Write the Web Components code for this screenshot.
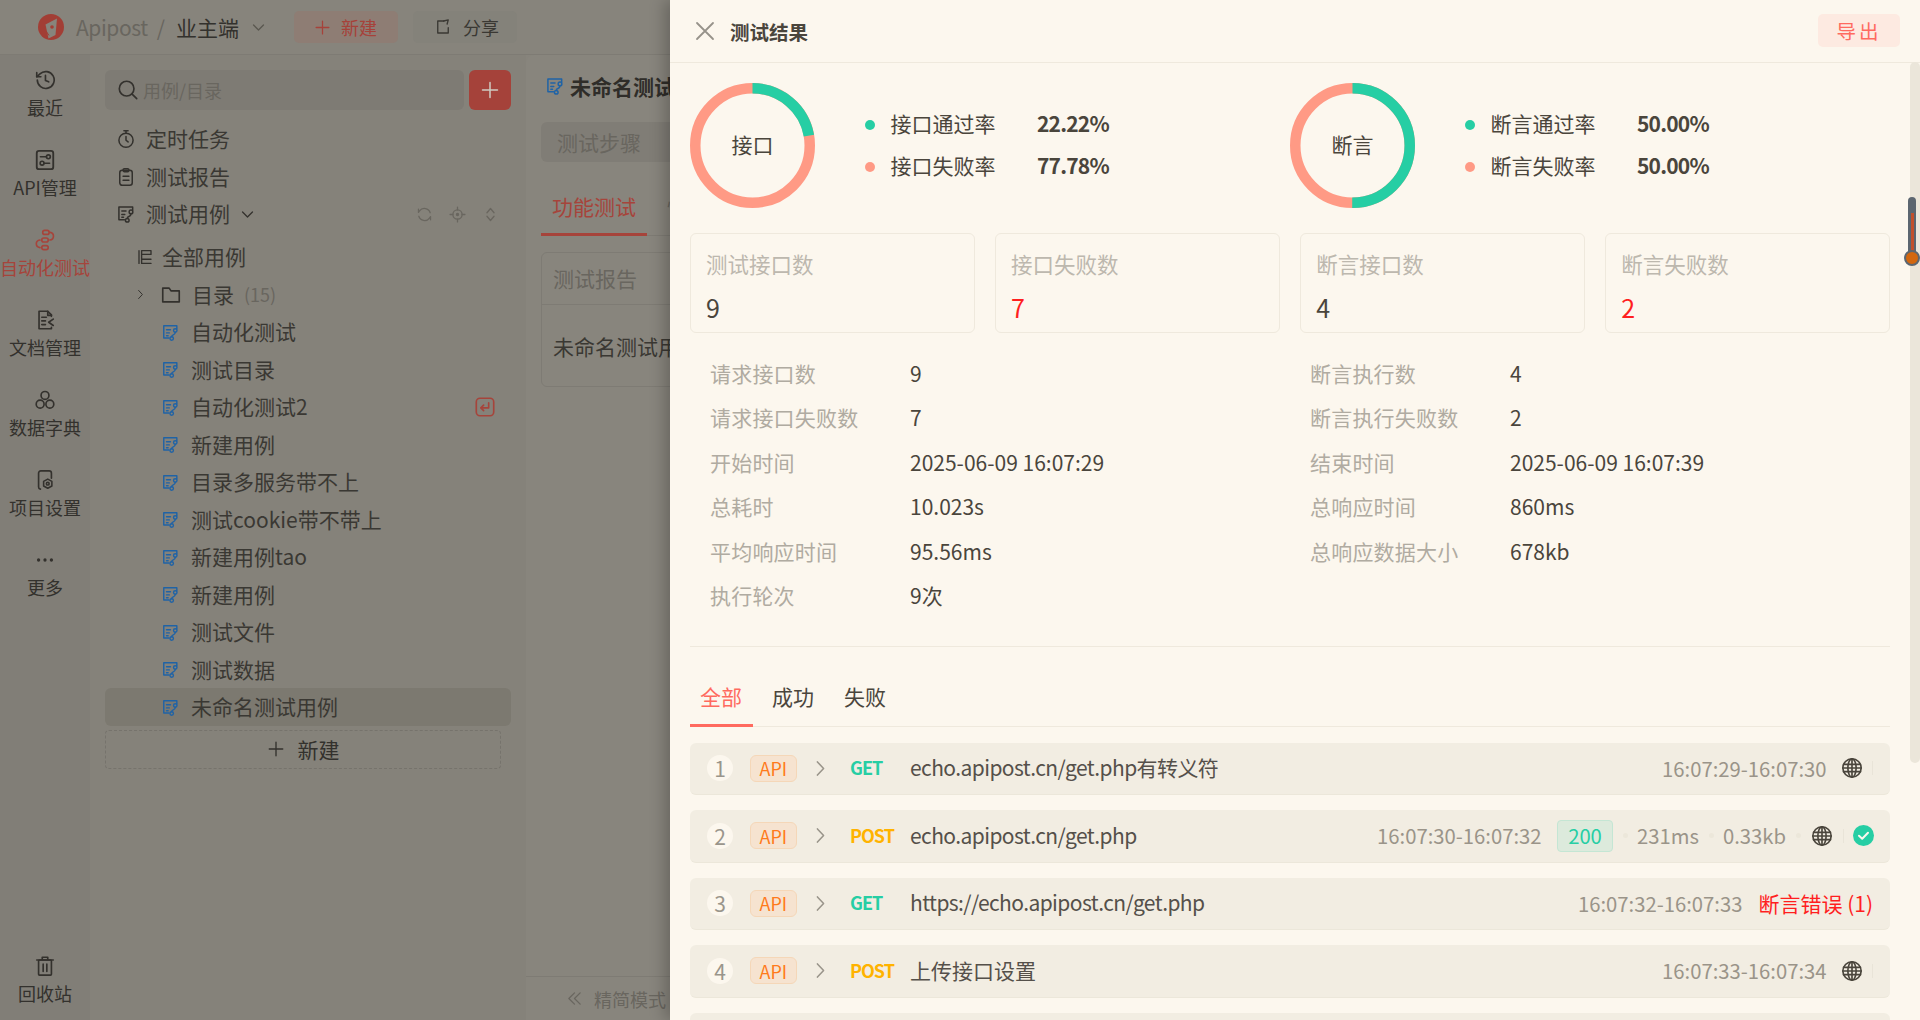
<!DOCTYPE html>
<html lang="zh-CN"><head><meta charset="utf-8"><title>Apipost</title>
<style>
html,body{margin:0;padding:0;height:1020px;overflow:hidden;background:#87847c}
body{font-family:"Noto Sans CJK SC","Noto Sans",sans-serif;font-size:21px;color:#3a3833}
</style></head><body>
<ap-app>
  <ap-topbar slot="top"></ap-topbar>
  <ap-nav slot="nav">
    <ap-nav-item icon="recent">最近</ap-nav-item>
    <ap-nav-item icon="api">API管理</ap-nav-item>
    <ap-nav-item icon="auto" active>自动化测试</ap-nav-item>
    <ap-nav-item icon="doc">文档管理</ap-nav-item>
    <ap-nav-item icon="dict">数据字典</ap-nav-item>
    <ap-nav-item icon="project">项目设置</ap-nav-item>
    <ap-nav-item icon="more">更多</ap-nav-item>
    <ap-nav-item icon="trash" bottom>回收站</ap-nav-item>
  </ap-nav>
  <ap-tree slot="tree">
    <ap-tree-row pad="11" icon="timer" gap="10">定时任务</ap-tree-row>
    <ap-tree-row pad="11" icon="report" gap="10">测试报告</ap-tree-row>
    <ap-tree-row pad="11" icon="casegrey" gap="10" expand tools>测试用例</ap-tree-row>
    <ap-tree-row pad="31" icon="all" gap="8" first>全部用例</ap-tree-row>
    <ap-tree-row pad="29" icon="folder" gap="10" caret count="(15)">目录</ap-tree-row>
    <ap-tree-row pad="56" icon="case" gap="11">自动化测试</ap-tree-row>
    <ap-tree-row pad="56" icon="case" gap="11">测试目录</ap-tree-row>
    <ap-tree-row pad="56" icon="case" gap="11" badge>自动化测试2</ap-tree-row>
    <ap-tree-row pad="56" icon="case" gap="11">新建用例</ap-tree-row>
    <ap-tree-row pad="56" icon="case" gap="11">目录多服务带不上</ap-tree-row>
    <ap-tree-row pad="56" icon="case" gap="11">测试cookie带不带上</ap-tree-row>
    <ap-tree-row pad="56" icon="case" gap="11">新建用例tao</ap-tree-row>
    <ap-tree-row pad="56" icon="case" gap="11">新建用例</ap-tree-row>
    <ap-tree-row pad="56" icon="case" gap="11">测试文件</ap-tree-row>
    <ap-tree-row pad="56" icon="case" gap="11">测试数据</ap-tree-row>
    <ap-tree-row pad="56" icon="case" gap="11" selected>未命名测试用例</ap-tree-row>
  </ap-tree>
  <ap-main slot="main"></ap-main>
  <ap-drawer slot="drawer">
    <ap-overview>
      <ap-ring pct="22.22" label="接口" pass="接口通过率" fail="接口失败率" v1="22.22%" v2="77.78%"></ap-ring>
      <ap-ring pct="50" label="断言" pass="断言通过率" fail="断言失败率" v1="50.00%" v2="50.00%"></ap-ring>
    </ap-overview>
    <ap-cards>
      <ap-stat label="测试接口数" value="9"></ap-stat>
      <ap-stat label="接口失败数" value="7" bad></ap-stat>
      <ap-stat label="断言接口数" value="4"></ap-stat>
      <ap-stat label="断言失败数" value="2" bad></ap-stat>
    </ap-cards>
    <ap-details>
      <ap-kv label="请求接口数">9</ap-kv><ap-kv label="断言执行数">4</ap-kv>
      <ap-kv label="请求接口失败数">7</ap-kv><ap-kv label="断言执行失败数">2</ap-kv>
      <ap-kv label="开始时间">2025-06-09 16:07:29</ap-kv><ap-kv label="结束时间">2025-06-09 16:07:39</ap-kv>
      <ap-kv label="总耗时">10.023s</ap-kv><ap-kv label="总响应时间">860ms</ap-kv>
      <ap-kv label="平均响应时间">95.56ms</ap-kv><ap-kv label="总响应数据大小">678kb</ap-kv>
      <ap-kv label="执行轮次">9次</ap-kv>
    </ap-details>
    <ap-result-tabs></ap-result-tabs>
    <ap-result n="1" method="GET" time="16:07:29-16:07:30" globe tight>echo.apipost.cn/get.php有转义符</ap-result>
    <ap-result n="2" method="POST" time="16:07:30-16:07:32" code="200" ms="231ms" size="0.33kb" globe ok tight>echo.apipost.cn/get.php</ap-result>
    <ap-result n="3" method="GET" time="16:07:32-16:07:33" err="断言错误 (1)" tight>https://echo.apipost.cn/get.php</ap-result>
    <ap-result n="4" method="POST" time="16:07:33-16:07:34" globe>上传接口设置</ap-result>
    <ap-result empty></ap-result>
  </ap-drawer>
</ap-app>
<script>
const s=(inner,size=22,extra='')=>`<svg width="${size}" height="${size}" viewBox="0 0 24 24" fill="none" stroke="currentColor" stroke-width="1.8" stroke-linecap="round" stroke-linejoin="round" ${extra}>${inner}</svg>`;
const caseI='<path d="M20 7.5V3.5H3.5V19H10"/><path d="M7 8.5h5M7 12.5h3.5M7 16h2"/><circle cx="18" cy="9.5" r="2.2"/><circle cx="13.5" cy="19.5" r="2.2"/><path d="M18 11.7c0 4.5-4.5 2.3-4.5 5.6"/>';
const I={
recent:'<path d="M3.6 12a9.2 9.2 0 1 0 2.9-6.7L3 8.5"/><path d="M3 4v4.5h4.5"/><path d="M12.5 7v5.5l3.5 1.5"/>',
api:'<rect x="3" y="2" width="18" height="20" rx="2.5" stroke-width="2"/><path d="M7 8.5h6.5M11 15.5h6"/><circle cx="15.7" cy="8.5" r="2.1"/><circle cx="8.8" cy="15.5" r="2.1"/>',
auto:'<rect x="9.5" y="1.5" width="7" height="4.4" rx="2.2"/><rect x="8.5" y="9.8" width="7" height="4.4" rx="2.2"/><rect x="8.5" y="18.1" width="7" height="4.4" rx="2.2"/><path d="M17.5 3.7c5 .6 5 7.6-.2 8.3"/><path d="M6.5 12c-5.300.7-5.300 7.600 0 8.300"/>',
doc:'<path d="M19 8V6.500L15 2.500H5.500V21.500H19V20"/><path d="M15 2.500V7H19"/><path d="M8.500 9h5M8.500 13h4M8.500 17h4"/><path d="M21 11l-5 3.500 5 3.500"/>',
dict:'<circle cx="12" cy="7" r="4.300"/><circle cx="6.700" cy="16.500" r="4.300"/><circle cx="17.300" cy="16.500" r="4.300"/>',
project:'<path d="M19 10V4.500a2.500 2.500 0 0 0-2.500-2.500H7.500A2.500 2.500 0 0 0 5 4.500v15A2.500 2.500 0 0 0 7 22"/><path d="M15 11l4.500 2.500v5L15 21l-4.500-2.500v-5z" stroke-width="1.700"/><circle cx="15" cy="16" r="1.500"/>',
more:'<circle cx="5" cy="12" r="1.800" fill="currentColor" stroke="none"/><circle cx="12" cy="12" r="1.800" fill="currentColor" stroke="none"/><circle cx="19" cy="12" r="1.800" fill="currentColor" stroke="none"/>',
trash:'<path d="M3 5.500h18M9 5.500V2.500h6v3"/><rect x="5" y="5.500" width="14" height="16.500" rx="1"/><path d="M10 10v8M14 10v8"/>',
timer:'<circle cx="12" cy="13.500" r="8.500"/><path d="M9.500 2h5M12 2v3M12 9v4.500l2.500 2"/>',
report:'<rect x="4.500" y="4" width="15" height="18" rx="3"/><rect x="8.500" y="2" width="7" height="3.600" rx="1.500"/><path d="M8.500 11h7M8.500 16h7"/>',
casegrey:caseI,case:caseI,
all:'<path d="M4 3.500v17M7.500 3.500H20v5H7.500zM7.500 8.500V15H20M7.500 15v5.500H20"/>',
folder:'<path d="M3 19.500V4.500h7l2 3h9v12z"/>',
search:'<circle cx="10.500" cy="10.500" r="8"/><path d="M16.500 16.500l5 5"/>',
plus:'<path d="M12 3v18M3 12h18"/>',
down:'<path d="M5 8.500l7 7 7-7"/>',right:'<path d="M8.500 4.500l7 7.500-7 7.500"/>',
share:'<path d="M13 4H5v16h14v-7"/><path d="M13 4l6-1.500-1.500 5.500"/>',
sync:'<path d="M20 9.500A8.500 8.500 0 0 0 5 7l-1.500 2V4.500"/><path d="M4 14.500A8.500 8.500 0 0 0 19 17l1.500-2v4.500"/>',
target:'<circle cx="12" cy="12" r="6.500"/><circle cx="12" cy="12" r="1.500" fill="currentColor"/><path d="M12 1.500v4M12 18.500v4M1.500 12h4M18.500 12h4"/>',
updown:'<path d="M7 9.500l5-6 5 6M7 14.500l5 6 5-6"/>',
enter:'<rect x="2.500" y="2.500" width="19" height="19" rx="4"/><path d="M16 7.500v5.500H8"/><path d="M10.500 10l-3 3 3 3"/>',
globe:'<circle cx="12" cy="12" r="10"/><ellipse cx="12" cy="12" rx="4.500" ry="10"/><path d="M12 2v20M2.800 8h18.400M2.800 16h18.400M2 12h20"/>',
dchev:'<path d="M12 4l-8 8 8 8M20 4l-8 8 8 8"/>',
close:'<path d="M4 4l16 16M20 4L4 20"/>'
};
const ic=(n,sz)=>s(I[n],sz);
const base=':host{box-sizing:border-box}*{box-sizing:border-box}svg{display:block;flex:none}';
const def=(name,css,render)=>customElements.define(name,class extends HTMLElement{
  constructor(){super();this.attachShadow({mode:'open'})}
  connectedCallback(){this.shadowRoot.innerHTML=`<style>${base}${css}</style>`+render(this)}
});
const A=(e,k)=>e.getAttribute(k);const H=(e,k)=>e.hasAttribute(k);

def('ap-app',`:host{display:grid;grid-template-columns:90px 436px 1fr;grid-template-rows:55px 965px;width:1920px;height:1020px;position:relative;overflow:hidden}
.t{grid-column:1/4;display:block}`,
()=>`<slot name="top" class="t"></slot><slot name="nav"></slot><slot name="tree"></slot><slot name="main"></slot><slot name="drawer"></slot>`);

def('ap-topbar',`:host{display:flex;grid-column:1/4;align-items:center;height:55px;border-bottom:1px solid #7e7b74;background:#87847c;padding-left:38px;color:#33312d}
.name{color:#69665f;margin-left:12px;font-size:21px;letter-spacing:-.4px}.sl{color:#69665f;margin-left:9px}.biz{margin-left:11px}
.ch{margin-left:10.500px;color:#5a5750}
.b{height:32px;border-radius:5px;display:flex;align-items:center;font-size:18px}
.new{margin-left:27.500px;width:104px;background:#8e7d74;color:#a6423a;padding-left:20px;gap:10px}
.sh{margin-left:15px;width:104px;background:#84827a;color:#3a3833;padding-left:21px;gap:11px}`,
()=>`<svg width="26" height="26" viewBox="0 0 26 26"><circle cx="13" cy="13" r="13" fill="#a23e35"/><path d="M7.500 10.500L19 4.500 17.500 21l-7 3.500z" fill="#87847c"/><circle cx="14" cy="13" r="1.800" fill="#a23e35"/><path d="M5.500 18l3 4.500M8 17l3 4.500" stroke="#a23e35" stroke-width="1"/></svg>
<span class="name">Apipost</span><span class="sl">/</span><span class="biz">业主端</span><span class="ch">${ic('down',17)}</span>
<div class="b new">${s(I.plus,17,'stroke-width="2.4"')}<span>新建</span></div><div class="b sh">${ic('share',18)}<span>分享</span></div>`);

def('ap-nav',`:host{display:flex;flex-direction:column;background:#817e77;height:965px;overflow:hidden}`,()=>`<slot></slot>`);
def('ap-nav-item',`:host{display:flex;flex-direction:column;align-items:center;height:80px;padding-top:14px;color:#33312d;font-size:18px;white-space:nowrap;flex:none}
:host([active]){color:#a6443b}:host([bottom]){margin-top:auto;margin-bottom:-1px}
.l{line-height:24px;margin-top:4px}`,
e=>`${ic(A(e,'icon'),22)}<span class="l"><slot></slot></span>`);

def('ap-tree',`:host{display:block;background:#85827a;height:965px;padding:15px 15px 0;overflow:hidden}
.sr{display:flex;gap:5px;margin-bottom:10.250px}
.in{flex:1;height:40px;background:#7e7b74;border-radius:6px;display:flex;align-items:center;padding-left:12px;gap:4px;font-size:18px;color:#69665f}
.in svg{color:#33312d}
.add{width:42px;height:40px;border-radius:6px;background:#a5423a;color:#cfcbc2;display:flex;align-items:center;justify-content:center}
.new{margin-top:4.500px;width:396px;height:39px;border:1px dashed #76736c;border-radius:4px;display:flex;align-items:center;justify-content:center;gap:13px;color:#33312d;padding-bottom:2px}`,
()=>`<div class="sr"><div class="in">${ic('search',22)}<span>用例/目录</span></div><div class="add">${s(I.plus,20,'stroke-width="2"')}</div></div>
<slot></slot><div class="new">${s(I.plus,18,'stroke-width="2.200"')}<span>新建</span></div>`);

def('ap-tree-row',`:host{display:flex;align-items:center;height:37.500px;border-radius:6px;white-space:nowrap;color:#3a3833;position:relative}
:host([selected]){background:#7c7970}:host([first]){margin-top:5.500px}
.i{color:#33312d}.blue{color:#1f63a6}
.t,.c{padding-bottom:2px}
.c{color:#69665f;font-size:18px;margin-left:10px}
.ex{margin-left:9px;color:#33312d}
.caret{color:#33312d;margin:0 13px 0 0}
.tools{margin-left:auto;display:flex;gap:16px;margin-right:12px;color:#69665f}
.badge{margin-left:auto;margin-right:15px;color:#a6443b}`,
e=>{const n=A(e,'icon');const sz=n=='all'?18:n=='folder'?22:n=='case'?19:20;
return `<style>:host{padding-left:${A(e,'pad')}px}.t{margin-left:${A(e,'gap')}px}</style>
${H(e,'caret')?`<span class="caret">${ic('right',13)}</span>`:''}
<span class="i ${n=='case'?'blue':''}">${ic(n,sz)}</span><span class="t"><slot></slot></span>
${H(e,'count')?`<span class="c">${A(e,'count')}</span>`:''}
${H(e,'expand')?`<span class="ex">${s(I.down,17,'stroke-width="2.600"')}</span>`:''}
${H(e,'tools')?`<span class="tools">${ic('sync',17)}${ic('target',17)}${ic('updown',17)}</span>`:''}
${H(e,'badge')?`<span class="badge">${ic('enter',22)}</span>`:''}`});

def('ap-main',`:host{display:flex;flex-direction:column;background:#88857d;height:965px;overflow:hidden;border-radius:8px 0 0 0;padding-left:15px;white-space:nowrap;position:relative}
.h{display:flex;align-items:center;height:46px;margin-top:8px;font-weight:700;color:#2f2d29;gap:5px;padding-left:4px}
.h svg{color:#1f63a6}
.st{margin-top:13px;height:40px;background:#807d76;border-radius:6px;color:#69665f;padding-left:16px;line-height:40px;width:400px}
.tb{margin-top:22px;height:52px;display:flex;border-bottom:1px solid #7e7b74;width:400px;gap:31px;align-items:center;padding-left:11px;position:relative;padding-bottom:8px}
.tb b{font-weight:400;color:#a6443b}.tb i{font-style:normal;color:#69665f}
.tb u{position:absolute;left:0;bottom:-1px;width:106px;height:3px;background:#a6443b}
.cd{margin-top:16px;height:135px;border:1px solid #7e7b74;border-radius:6px;width:400px;color:#3a3833}
.ch{height:52px;line-height:50px;padding-left:11px;color:#69665f;border-bottom:1px solid #7e7b74}
.cb{padding-left:11px;line-height:82px}
.f{position:absolute;left:0;right:0;bottom:0;height:44px;border-top:1px solid #7e7b74;display:flex;align-items:center;padding-left:40px;gap:11px;font-size:18px;color:#69665f}`,
()=>`<div class="h">${ic('case',20)}<span>未命名测试用例</span></div>
<div class="st">测试步骤</div>
<div class="tb"><b>功能测试</b><i>性能测试</i><u></u></div>
<div class="cd"><div class="ch">测试报告</div><div class="cb">未命名测试用例</div></div>
<div class="f">${s(I.dchev,17,'stroke-width="1.500"')}<span>精简模式</span></div>`);

def('ap-drawer',`:host{position:absolute;top:0;right:0;bottom:0;width:1250px;background:#fcf7ee;box-shadow:-6px 0 14px rgba(0,0,0,.22);color:#4a453c;overflow:hidden;display:block}
.hd{height:63px;border-bottom:1.500px solid #efe9dd;display:flex;align-items:center;padding:0 20px 0 23px}
.x{color:#96928a}.tt{margin-left:13px;font-size:19.500px;font-weight:700;color:#4a453c}
.ex{margin-left:auto;width:82px;height:33px;margin-top:-2px;background:#fdeae1;color:#ff6a5f;border-radius:5px;display:flex;align-items:center;justify-content:center;font-size:19.500px;letter-spacing:3px}
.bd{padding:20px 30px 0 20px}
.track{position:absolute;right:0;top:62px;width:10px;height:701px;border-radius:5px;background:#ebe6da}
.th{position:absolute;left:1238px;top:197px;width:8px;height:62px;background:#5c6670;border-radius:4px}
.th i{position:absolute;left:2.500px;top:16px;width:3px;height:42px;background:#c2502c}
.bb{position:absolute;left:1234px;top:250px;width:16px;height:16px;border-radius:50%;background:#d2670f;border:2px solid #5c6670}`,
()=>`<div class="hd"><span class="x">${s(I.close,24,'stroke-width="2.400"')}</span><span class="tt">测试结果</span><span class="ex">导出</span></div>
<div class="bd"><slot></slot></div><div class="track"></div><div class="th"><i></i></div><div class="bb"></div>`);

def('ap-overview',`:host{display:grid;grid-template-columns:600px 600px}`,()=>`<slot></slot>`);
def('ap-ring',`:host{display:flex;align-items:center;height:125px;position:relative}
.w{position:relative;width:125px;height:125px;flex:none}
.w span{position:absolute;inset:0;display:flex;align-items:center;justify-content:center;padding-bottom:4px}
.lg{margin-left:50px;display:grid;grid-template-columns:10px 162px auto;align-items:center;color:#4a453c}
.lg>*{height:42px;line-height:38px}
.lg>.d{width:10px;height:10px;border-radius:50%;align-self:center}
.n{margin-left:15.500px}.v{font-weight:700;letter-spacing:-.8px}`,
e=>{const p=+A(e,'pct'),r=57.250,c=2*Math.PI*r,g=c*p/100;
return `<div class="w"><svg width="125" height="125" viewBox="0 0 125 125"><circle cx="62.500" cy="62.500" r="${r}" fill="none" stroke="#ff9a85" stroke-width="10.500"/><circle cx="62.500" cy="62.500" r="${r}" fill="none" stroke="#26cea4" stroke-width="10.500" stroke-dasharray="${g} ${c-g}" transform="rotate(-90 62.500 62.500)"/></svg><span>${A(e,'label')}</span></div>
<div class="lg"><i class="d" style="background:#26cea4"></i><span class="n">${A(e,'pass')}</span><span class="v">${A(e,'v1')}</span><i class="d" style="background:#ff9a85"></i><span class="n">${A(e,'fail')}</span><span class="v">${A(e,'v2')}</span></div>`});

def('ap-cards',`:host{display:grid;grid-template-columns:repeat(4,1fr);column-gap:20.300px;margin-top:25px}`,()=>`<slot></slot>`);
def('ap-stat',`:host{display:block;height:100px;border:1.500px solid #efe9dd;border-radius:6px;padding-left:15px}
.l{color:#bdb8ae;line-height:30px;margin-top:14.500px;font-size:21.500px}.v{font-size:25px;line-height:34px;margin-top:11px;color:#4a453c}
.b{color:#ff1f1f}`,
e=>`<div class="l">${A(e,'label')}</div><div class="v ${H(e,'bad')?'b':''}">${A(e,'value')}</div>`);

def('ap-details',`:host{display:grid;grid-template-columns:600px 600px;margin-top:18.500px;padding-bottom:27px;border-bottom:1.500px solid #efe9dd}`,()=>`<slot></slot>`);
def('ap-kv',`:host{display:flex;height:44.500px;align-items:center;padding-left:20px;padding-bottom:2px}
.l{width:200px;color:#b0aba1;letter-spacing:.2px}.v{color:#4a453c}`,e=>`<span class="l">${A(e,'label')}</span><span class="v"><slot></slot></span>`);

def('ap-result-tabs',`:host{display:flex;height:80px;border-bottom:1.500px solid #efe9dd;margin-bottom:16px;padding-left:10px;gap:30px;padding-top:31px;position:relative;line-height:36px}
.a{color:#ff6a5f}u{position:absolute;left:0;bottom:-1.500px;width:63px;height:3px;background:#ff6a5f}`,
()=>`<span class="a">全部</span><span>成功</span><span>失败</span><u></u>`);

def('ap-result',`:host{display:flex;align-items:center;height:52.500px;margin-bottom:15px;background:#f2ede2;border-bottom:1.500px solid #ece7da;border-radius:6px;padding:0 17px 0 17px;white-space:nowrap;color:#55504a}
:host([ok]){padding-right:16px}
.n{width:26px;height:26px;border-radius:50%;background:#fcf7ee;color:#9a958b;display:flex;align-items:center;justify-content:center;flex:none}
.api{margin-left:16.500px;width:47.500px;height:27px;border:1.500px solid #f5d7b8;background:#f6e3d0;border-radius:6px;color:#ff7a1a;font-size:18px;display:flex;align-items:center;justify-content:center;flex:none}
.cv{width:53px;padding-left:13px;color:#9a958b;flex:none}
.m{width:60px;font-weight:700;font-size:18px;flex:none;letter-spacing:-1px;padding-bottom:2px}
.GET{color:#26cea4}.POST{color:#ffb300}
.u{padding-bottom:2px}.tight{letter-spacing:-.58px}
.r{margin-left:auto;display:flex;align-items:center;color:#9a9489;font-size:20.250px}
.g{color:#4a453c;margin-left:14.500px}
.sp{width:1px;height:14px;background:#e9e4d8;margin-left:9px}
.tag{margin-left:15.500px;width:56px;height:32px;background:#dceadc;border:1px solid #c4e6d4;border-radius:4px;color:#26cea4;display:flex;align-items:center;justify-content:center}
.dot{width:5px;height:5px;border-radius:50%;background:#ece7da;margin:0 9px 0 10px}
.ck{margin-left:9px}.er{color:#ff1f1f;margin-left:16px;font-size:21px}`,
e=>{if(H(e,'empty'))return '';const m=A(e,'method');return `<span class="n">${A(e,'n')}</span><span class="api">API</span><span class="cv">${s(I.right,21,'stroke-width="2"')}</span><span class="m ${m}">${m}</span><span class="u ${H(e,'tight')?'tight':''}"><slot></slot></span>
<span class="r"><span>${A(e,'time')}</span>
${H(e,'code')?`<span class="tag">${A(e,'code')}</span><i class="dot"></i><span>${A(e,'ms')}</span><i class="dot"></i><span>${A(e,'size')}</span><i class="dot" style="margin-right:0"></i>`:''}
${H(e,'globe')?`<span class="g" ${H(e,'code')?'style="margin-left:10px"':''}>${s(I.globe,22,'stroke-width="1.700"')}</span><i class="sp" ${H(e,'code')?'style="margin-left:10px"':''}></i>`:''}
${H(e,'ok')?`<svg class="ck" width="21" height="21" viewBox="0 0 21 21"><circle cx="10.500" cy="10.500" r="10.500" fill="#26cea4"/><path d="M6 10.800l3.200 3 5.800-6" fill="none" stroke="#fcf7ee" stroke-width="2" stroke-linecap="round" stroke-linejoin="round"/></svg>`:''}
${H(e,'err')?`<span class="er">${A(e,'err')}</span>`:''}</span>`});
</script>
</body></html>
